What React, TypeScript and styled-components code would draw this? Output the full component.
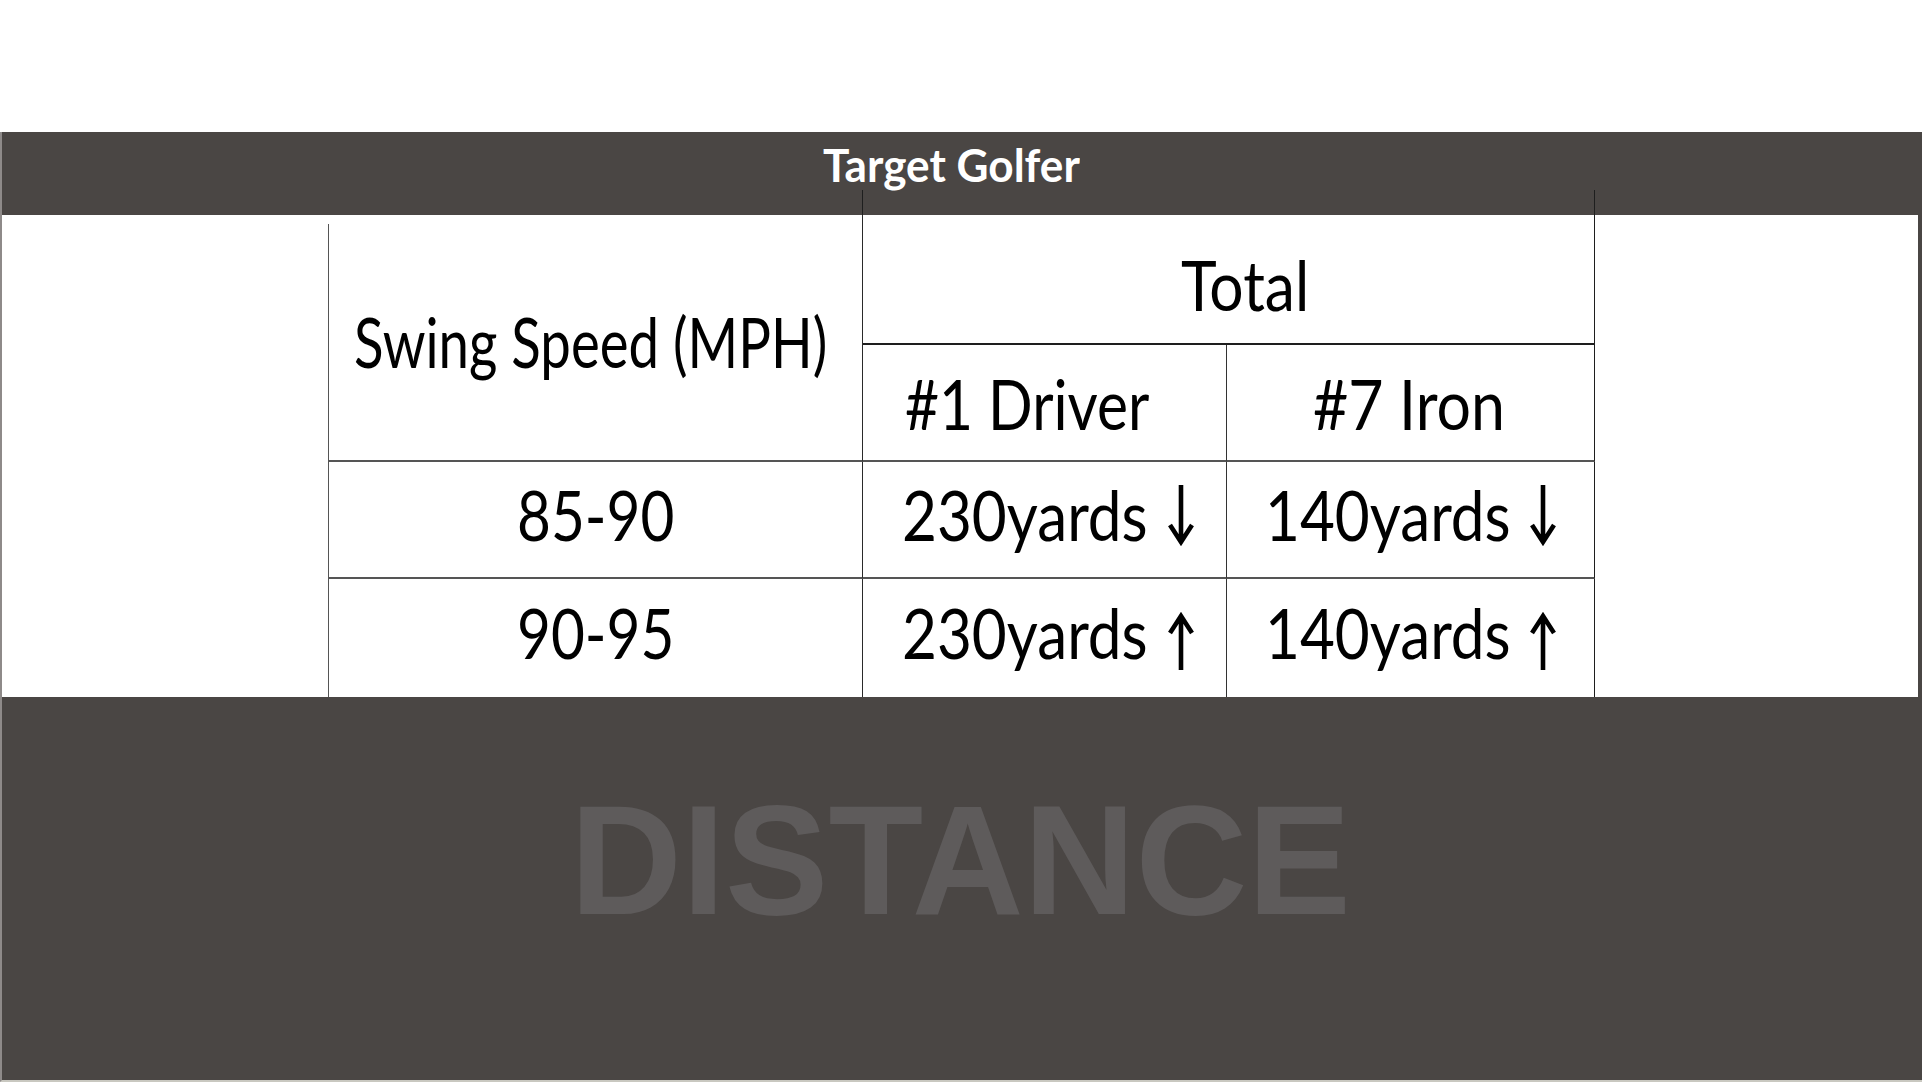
import React, { useLayoutEffect, useRef, useState } from "react";
import styled, { createGlobalStyle, css } from "styled-components";

const GlobalStyle = createGlobalStyle`
  html, body { margin: 0; padding: 0; background: #ffffff; }
  body { font-family: Lato, "Open Sans", "DejaVu Sans", sans-serif; }
  * { box-sizing: border-box; }
`;

const Page = styled.main`
  width: 1922px;
  height: 1082px;
  display: flex;
  flex-direction: column;
  background: #ffffff;
  overflow: hidden;
`;

const TopGap = styled.div`
  height: 132px;
  flex: none;
`;

const Board = styled.section`
  flex: 1;
  display: flex;
  flex-direction: column;
  background: #4a4644;
  border-left: 2px solid #8e8a89;
  border-bottom: 2px solid #c9c8c0;
`;

const TitleBar = styled.header`
  height: 83px;
  flex: none;
  display: flex;
  justify-content: center;
  align-items: flex-start;
  padding: 10px 21px 0 0;
`;

const Title = styled.h1`
  margin: 0;
  font: 700 46px/46px Lato, "Open Sans", sans-serif;
  color: #ffffff;
  white-space: nowrap;
  display: flex;
`;

const TableWrap = styled.div`
  height: 482px;
  flex: none;
  margin-right: 4px;
  background: #ffffff;
  padding-left: 326px;
  display: flex;
  align-items: flex-start;
`;

const Grid = styled.div`
  display: grid;
  grid-template-columns: 535px 364px 368px;
  grid-template-rows: 130px 117px 117px 118px;
  font: 400 70px/70px Lato, "Open Sans", sans-serif;
  color: #000000;
`;

type CellProps = {
  $area: string;
  $left?: string;
  $right?: string;
  $bottom?: string;
  $pad?: string;
};

const Cell = styled.div<CellProps>`
  grid-area: ${(p) => p.$area};
  position: relative;
  display: flex;
  align-items: center;
  justify-content: center;
  padding: ${(p) => p.$pad ?? "0"};
  ${(p) =>
    p.$left &&
    css`
      border-left: 1px solid ${p.$left};
    `}
  ${(p) =>
    p.$right &&
    css`
      border-right: 1px solid ${p.$right};
    `}
  ${(p) =>
    p.$bottom &&
    css`
      border-bottom: 2px solid ${p.$bottom};
    `}
`;

const SpeedHead = styled(Cell)`
  border-left: 1px solid transparent;
  &::before {
    content: "";
    position: absolute;
    left: -1px;
    top: 9px;
    bottom: -2px;
    width: 1px;
    background: #555555;
  }
`;

const TotalHead = styled(Cell)`
  &::before,
  &::after {
    content: "";
    position: absolute;
    top: -25px;
    width: 1px;
    height: 25px;
    background: #1e1e1e;
  }
  &::before {
    left: -1px;
  }
  &::after {
    right: -1px;
  }
`;

const FitText = styled.span`
  display: inline-block;
  white-space: nowrap;
  transform-origin: 0 50%;
`;

function Fit({ width, children }: { width: number; children: React.ReactNode }) {
  const ref = useRef<HTMLSpanElement>(null);
  const [fit, setFit] = useState<{ s: number; trim: number } | null>(null);
  useLayoutEffect(() => {
    let alive = true;
    const measure = () => {
      const el = ref.current;
      if (!el || !alive) return;
      const w = el.offsetWidth;
      if (w > 0) setFit({ s: width / w, trim: w - width });
    };
    measure();
    if (document.fonts) document.fonts.ready.then(measure);
    return () => {
      alive = false;
    };
  }, [width]);
  return (
    <FitText
      ref={ref}
      style={fit ? { transform: `scaleX(${fit.s})`, marginRight: -fit.trim } : undefined}
    >
      {children}
    </FitText>
  );
}

const ArrowSvg = styled.svg<{ $dy: number }>`
  flex: none;
  display: block;
  margin-left: 20px;
  margin-top: ${(p) => p.$dy}px;
`;

function Arrow({ dir }: { dir: "up" | "down" }) {
  if (dir === "down") {
    return (
      <ArrowSvg width="26" height="62" viewBox="0 0 26 62" $dy={4} aria-label="down">
        <path d="M13 0V57M2 40L13 57L24 40" fill="none" stroke="#000" strokeWidth="4.6" />
      </ArrowSvg>
    );
  }
  return (
    <ArrowSvg width="26" height="59" viewBox="0 0 26 59" $dy={16} aria-label="up">
      <path d="M13 59V5M2 22L13 5L24 22" fill="none" stroke="#000" strokeWidth="4.6" />
    </ArrowSvg>
  );
}

const Footer = styled.div`
  flex: 1;
  display: flex;
  justify-content: center;
  align-items: flex-start;
  padding: 86px 3px 0 0;
`;

const Watermark = styled.div`
  font: 700 155px/155px "Liberation Sans", Arial, sans-serif;
  letter-spacing: 0;
  color: #5e5b5b;
  white-space: nowrap;
`;

type Row = { speed: string; driver: string; iron: string; dir: "up" | "down"; pad: string };

const rows: Row[] = [
  { speed: "85-90", driver: "230yards", iron: "140yards", dir: "down", pad: "0 0 11px 0" },
  { speed: "90-95", driver: "230yards", iron: "140yards", dir: "up", pad: "0 0 12px 0" },
];

export default function App() {
  return (
    <>
      <GlobalStyle />
      <Page>
        <TopGap />
        <Board>
          <TitleBar>
            <Title>
              <Fit width={257}>Target Golfer</Fit>
            </Title>
          </TitleBar>
          <TableWrap>
            <Grid>
              <SpeedHead $area="1 / 1 / 3 / 2" $right="#2a2a2a" $bottom="#555555" $pad="6px 10px 0 0">
                <Fit width={473}>Swing Speed (MPH)</Fit>
              </SpeedHead>
              <TotalHead $area="1 / 2 / 2 / 4" $right="#1e1e1e" $bottom="#1e1e1e" $pad="9px 0 0 34px">
                <Fit width={128}>Total</Fit>
              </TotalHead>
              <Cell $area="2 / 2 / 3 / 3" $right="#333333" $bottom="#555555" $pad="0 34px 0 0">
                <Fit width={244}>#1 Driver</Fit>
              </Cell>
              <Cell $area="2 / 3 / 3 / 4" $right="#1e1e1e" $bottom="#555555" $pad="0 4px 0 0">
                <Fit width={192}>#7 Iron</Fit>
              </Cell>
              {rows.map((r, i) => {
                const line = `${3 + i}`;
                const bottom = i < rows.length - 1 ? "#555555" : undefined;
                return (
                  <React.Fragment key={r.speed}>
                    <Cell
                      $area={`${line} / 1 / ${3 + i + 1} / 2`}
                      $left="#555555"
                      $right="#2a2a2a"
                      $bottom={bottom}
                      $pad={r.pad}
                    >
                      <Fit width={157}>{r.speed}</Fit>
                    </Cell>
                    <Cell
                      $area={`${line} / 2 / ${3 + i + 1} / 3`}
                      $right="#333333"
                      $bottom={bottom}
                      $pad={r.pad.replace(/ 0$/, " 7px")}
                    >
                      <Fit width={246}>{r.driver}</Fit>
                      <Arrow dir={r.dir} />
                    </Cell>
                    <Cell
                      $area={`${line} / 3 / ${3 + i + 1} / 4`}
                      $right="#1e1e1e"
                      $bottom={bottom}
                      $pad={r.pad}
                    >
                      <Fit width={246}>{r.iron}</Fit>
                      <Arrow dir={r.dir} />
                    </Cell>
                  </React.Fragment>
                );
              })}
            </Grid>
          </TableWrap>
          <Footer>
            <Watermark>DISTANCE</Watermark>
          </Footer>
        </Board>
      </Page>
    </>
  );
}
